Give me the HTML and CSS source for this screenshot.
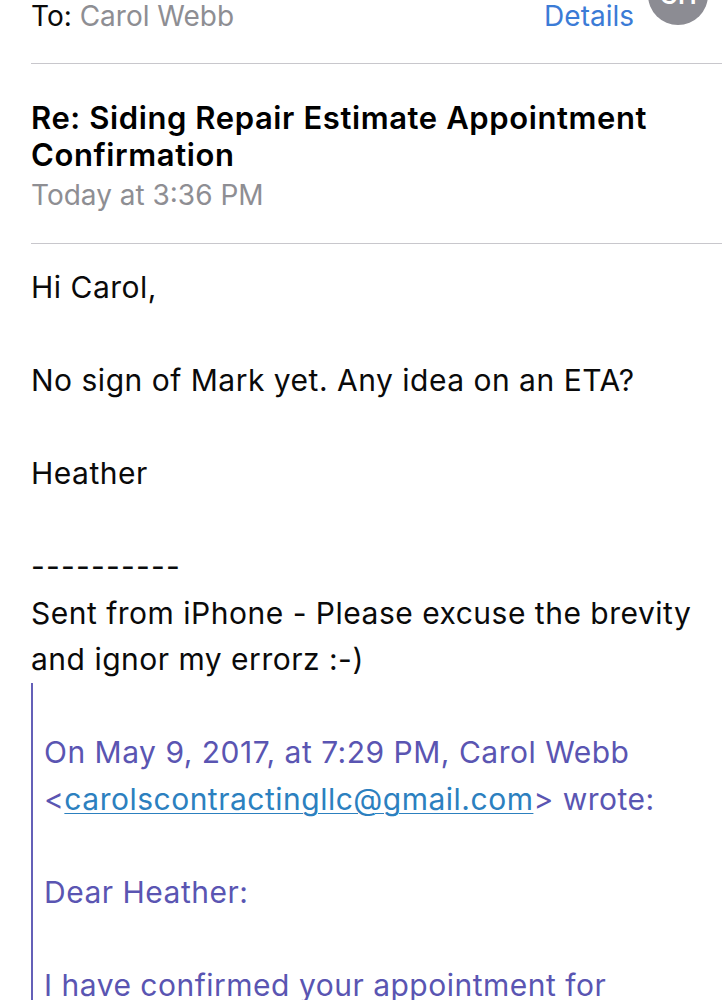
FILE: index.html
```html
<!DOCTYPE html>
<html lang="en">
<head>
<meta charset="utf-8">
<title>Re: Siding Repair Estimate Appointment Confirmation</title>
<link rel="stylesheet" href="styles.css">
</head>
<body>
<div class="mail">
  <div class="header-row">
    <div class="to"><span class="to-label">To:</span> <span class="to-name">Carol Webb</span></div>
    <div class="header-right">
      <span class="details">Details</span>
      <div class="avatar"><span>CH</span></div>
    </div>
  </div>
  <div class="divider"></div>
  <div class="subject-block">
    <div class="subject">Re: Siding Repair Estimate Appointment<br>Confirmation</div>
    <div class="date">Today at 3:36 PM</div>
  </div>
  <div class="divider"></div>
  <div class="body">
    <div class="line">Hi Carol,</div>
    <div class="line blank"></div>
    <div class="line">No sign of Mark yet. Any idea on an ETA?</div>
    <div class="line blank"></div>
    <div class="line">Heather</div>
    <div class="line blank"></div>
    <div class="line dashes">----------</div>
    <div class="line">Sent from iPhone - Please excuse the brevity</div>
    <div class="line">and ignor my errorz :-)</div>
    <div class="quote">
      <div class="line blank"></div>
      <div class="line">On May 9, 2017, at 7:29 PM, Carol Webb</div>
      <div class="line">&lt;<a class="mail-link" href="#">carolscontractingllc@gmail.com</a>&gt; wrote:</div>
      <div class="line blank"></div>
      <div class="line">Dear Heather:</div>
      <div class="line blank"></div>
      <div class="line">I have confirmed your appointment for</div>
    </div>
  </div>
</div>
</body>
</html>
```
FILE: styles.css
```css
html, body {
  margin: 0;
  padding: 0;
  background: #ffffff;
}
body {
  width: 722px;
  height: 1000px;
  overflow: hidden;
  font-family: Inter, "Noto Sans", sans-serif;
  color: #0a0a0a;
  -webkit-font-smoothing: antialiased;
}
.mail {
  padding-left: 31px;
}
.header-row {
  display: flex;
  justify-content: space-between;
  align-items: flex-start;
  font-size: 28px;
  line-height: 32px;
  height: 32px;
  margin-bottom: 31px;
}
.to-label {
  color: #0a0a0a;
}
.to-name {
  color: #8e8e93;
}
.header-right {
  display: flex;
  align-items: flex-start;
  gap: 14px;
  padding-right: 14px;
}
.details {
  color: #3b7bd6;
}
.avatar {
  width: 60px;
  height: 60px;
  border-radius: 50%;
  background: #8c8c93;
  margin-top: -35px;
  display: flex;
  align-items: center;
  justify-content: center;
  color: #ffffff;
  font-size: 25px;
  font-weight: 600;
}
.divider {
  height: 1px;
  background: #c8c7cc;
}
.subject-block {
  padding-top: 35px;
  padding-bottom: 31px;
}
.subject {
  font-size: 31px;
  font-weight: 600;
  line-height: 37px;
  letter-spacing: 0.6px;
  color: #000000;
}
.date {
  margin-top: 5px;
  font-size: 28px;
  line-height: 34px;
  color: #8e8e93;
}
.body {
  padding-top: 20px;
  font-size: 30px;
  line-height: 46.5px;
  letter-spacing: 0.5px;
}
.line {
  white-space: nowrap;
}
.blank {
  height: 46.5px;
}
.dashes {
  letter-spacing: 1.2px;
}
.quote {
  border-left: 2px solid #6460b8;
  padding-left: 11px;
  color: #5a55b2;
}
.mail-link {
  color: #2c80bf;
  text-decoration: underline;
  text-decoration-thickness: 1px;
  text-underline-offset: 3px;
}
```
